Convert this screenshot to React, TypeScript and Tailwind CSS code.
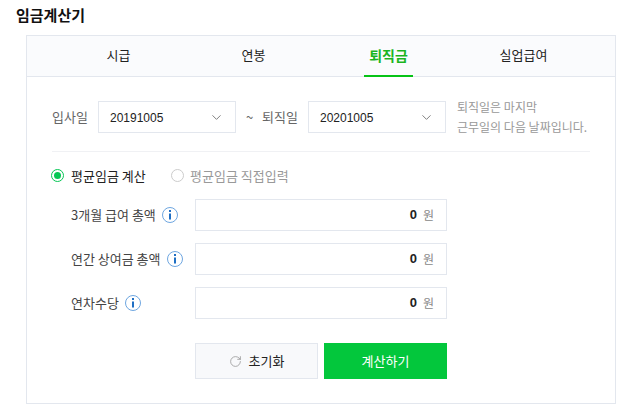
import { ChevronDown, RotateCw } from 'lucide-react';

const font = "font-['Noto_Sans_CJK_KR','Noto_Sans',sans-serif]";

const tabs = ['시급', '연봉', '퇴직금', '실업급여'];

const rows = [
  { label: '3개월 급여 총액' },
  { label: '연간 상여금 총액' },
  { label: '연차수당' },
];

function InfoIcon() {
  return (
    <svg width="16" height="16" viewBox="0 0 16 16" className="ml-[6px] shrink-0">
      <circle cx="8" cy="8" r="7.5" fill="none" stroke="#6ea6e0" strokeWidth="1" />
      <rect x="7" y="3" width="2" height="2" fill="#1f6fc4" />
      <rect x="7" y="6.5" width="2" height="6" fill="#1f6fc4" />
    </svg>
  );
}

function DateSelect({ value }: { value: string }) {
  return (
    <div className="flex h-[32px] w-[138px] items-center justify-between border border-[#e3e7ee] px-[11px] text-[12px] text-[#222]">
      <span className="pt-[1px] font-['Liberation_Sans',sans-serif]">{value}</span>
      <ChevronDown size={15} strokeWidth={1.5} className="text-[#777]" />
    </div>
  );
}

export default function App() {
  return (
    <div className={`h-[416px] w-[633px] overflow-hidden bg-white pl-[16px] pt-[5px] ${font}`}>
      <h1 className="h-[30px] text-[15px] font-bold leading-[20px] text-[#111]">임금계산기</h1>

      <div className="ml-[10px] h-[369px] w-[590px] border border-[#e3e7ee]">
        {/* tabs */}
        <div className="flex h-[41px] justify-center border-b border-[#e3e7ee] bg-[#fafbfd]">
          <div className="grid w-[540px] grid-cols-4">
            {tabs.map((tab) => (
              <div key={tab} className="flex justify-center">
                <div
                  className={
                    tab === '퇴직금'
                      ? 'h-[41px] w-[49px] border-b-2 border-[#06c316] text-center text-[14px] font-bold leading-[38px] text-[#1bb51f]'
                      : 'h-[41px] text-center text-[13px] leading-[37px] text-[#222]'
                  }
                >
                  {tab}
                </div>
              </div>
            ))}
          </div>
        </div>

        <div className="px-[25px]">
          {/* dates */}
          <div className="flex h-[75px] items-center border-b border-[#f0f1f4] pt-[6px] text-[13px] text-[#666]">
            <span className="w-[46px]">입사일</span>
            <DateSelect value="20191005" />
            <span className="ml-[10px] w-[16px]">~</span>
            <span className="w-[46px]">퇴직일</span>
            <DateSelect value="20201005" />
            <p className="ml-[11px] whitespace-nowrap text-[12px] leading-[20px] text-[#999]">
              퇴직일은 마지막
              <br />
              근무일의 다음 날짜입니다.
            </p>
          </div>

          {/* radios */}
          <div className="-ml-px flex h-[47px] items-center text-[13px]">
            <span className="flex h-[13px] w-[13px] items-center justify-center rounded-full border border-[#06c755]">
              <span className="h-[7px] w-[7px] rounded-full bg-[#06c755]" />
            </span>
            <span className="ml-[7px] w-[100px] text-[#222]">평균임금 계산</span>
            <span className="h-[13px] w-[13px] rounded-full border border-[#ccc]" />
            <span className="ml-[6px] text-[#999]">평균임금 직접입력</span>
          </div>

          {/* amount rows */}
          <div className="flex flex-col gap-[12px]">
            {rows.map((row) => (
              <div key={row.label} className="flex items-center pl-[19px]">
                <div className="flex w-[124px] items-center text-[13px] text-[#444]">
                  {row.label}
                  <InfoIcon />
                </div>
                <div className="flex h-[32px] w-[252px] items-center justify-end border border-[#e3e7ee] pr-[12px]">
                  <span className="font-['Liberation_Sans',sans-serif] text-[13px] font-bold text-[#222]">0</span>
                  <span className="ml-[6px] text-[12px] text-[#888]">원</span>
                </div>
              </div>
            ))}
          </div>

          {/* buttons */}
          <div className="ml-[143px] mt-[24px] flex gap-[6px]">
            <button className="flex h-[36px] w-[123px] items-center justify-center gap-[7px] border border-[#e3e7ee] bg-[#f8f9fb] text-[13px] text-[#222]">
              <RotateCw size={13} strokeWidth={1.5} className="text-[#999]" />
              초기화
            </button>
            <button className="h-[36px] w-[123px] bg-[#03c73c] text-[13px] text-white">계산하기</button>
          </div>
        </div>
      </div>
    </div>
  );
}
